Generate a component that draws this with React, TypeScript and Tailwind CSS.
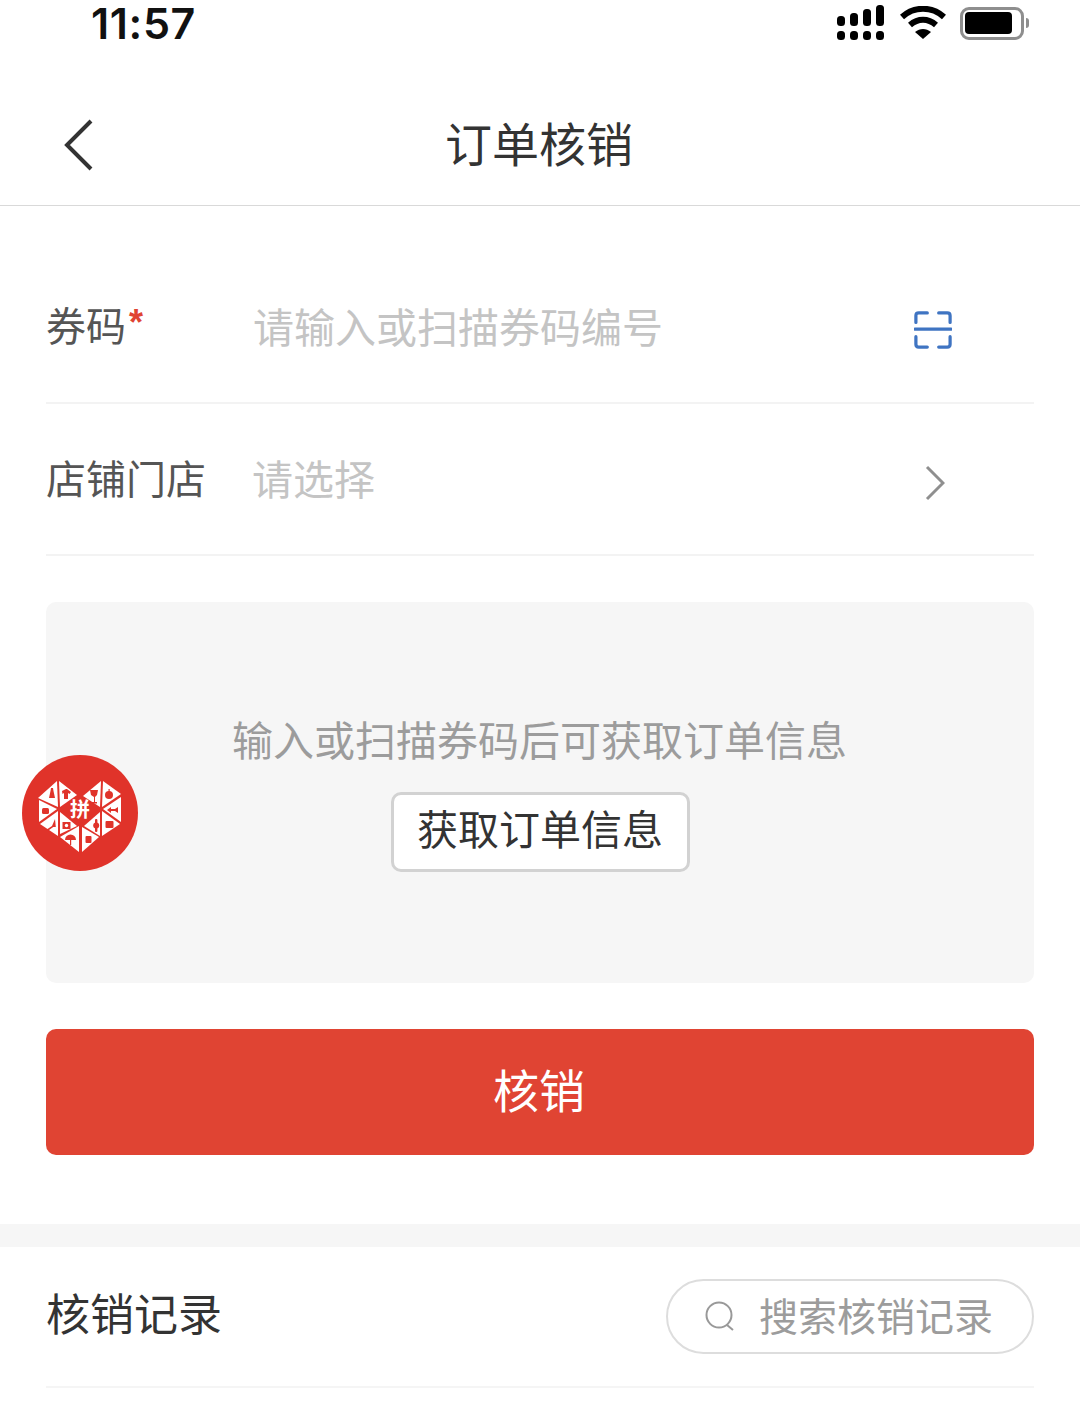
const font = { fontFamily: '"Noto Sans CJK SC", "Liberation Sans", sans-serif' };

function StatusBar() {
  return (
    <div className="flex h-[48px] items-start justify-between pl-[91px] pr-[52px]">
      <span className="text-[43px] leading-[46px] font-semibold tracking-[0.6px] text-[#111] font-['Inter']">11:57</span>
      <div className="flex items-center gap-[14px] pt-[5px]">
        <svg width="50" height="36" viewBox="0 0 50 36" fill="#000">
          <rect x="1" y="11" width="8" height="10" rx="3.5" />
          <rect x="14" y="8" width="8" height="13" rx="3.5" />
          <rect x="27" y="4" width="8" height="17" rx="3.5" />
          <rect x="40" y="0" width="8" height="21" rx="3.5" />
          <rect x="1" y="26" width="8" height="9" rx="3.5" />
          <rect x="14" y="26" width="8" height="9" rx="3.5" />
          <rect x="27" y="26" width="8" height="9" rx="3.5" />
          <rect x="40" y="26" width="8" height="9" rx="3.5" />
        </svg>
        <svg width="46" height="34" viewBox="0 0 46 34" fill="none" stroke="#000" strokeWidth="6">
          <path d="M2 11 C14 0 32 0 44 11" />
          <path d="M10 19 C18 12 28 12 36 19" />
          <path d="M15 26 L23 33 L31 26 C26 22 20 22 15 26Z" fill="#000" stroke="none" />
        </svg>
        <div className="-mr-[1px] flex items-center gap-[2px]">
          <div className="flex h-[33px] w-[64px] items-center rounded-[9px] border-[3px] border-[#8e8e8e] p-[2px]">
            <div className="h-[22px] w-[47px] rounded-[4px] bg-black" />
          </div>
          <div className="h-[10px] w-[3px] rounded-r-full bg-[#8e8e8e]" />
        </div>
      </div>
    </div>
  );
}

function NavBar() {
  return (
    <div className="relative flex h-[158px] items-center justify-center border-b border-[#d9d9d9] pt-[30px] pr-[2px]">
      <svg className="absolute left-[64px] top-[71px]" width="30" height="52" viewBox="0 0 30 52" fill="none" stroke="#333" strokeWidth="4">
        <path d="M27 2 L3 26 L27 50" />
      </svg>
      <span className="text-[47px] leading-[60px] text-[#333]">订单核销</span>
    </div>
  );
}

function CodeRow() {
  return (
    <div className="flex h-[198px] items-center border-b-2 border-[#f3f3f3] pt-[46px]">
      <div className="flex w-[207px] items-start pb-[7px]">
        <span className="text-[40px] leading-[50px] text-[#555]">券码</span>
        <span className="ml-[3px] mt-[6px] font-['Liberation_Sans'] text-[36px] leading-[36px] font-bold text-[#e04433]">*</span>
      </div>
      <span className="flex-1 pb-[4px] text-[41px] leading-[50px] text-[#c4c4c4]">请输入或扫描券码编号</span>
      <svg className="mr-[82px] mt-[5px]" width="38" height="38" viewBox="0 0 40 40" fill="none" stroke="#3f74c2" strokeWidth="3.4" strokeLinecap="round">
        <path d="M2 12 V5 Q2 2 5 2 H14" />
        <path d="M26 2 H35 Q38 2 38 5 V12" />
        <path d="M1 19 H39" />
        <path d="M2 27 V35 Q2 38 5 38 H14" />
        <path d="M26 38 H35 Q38 38 38 35 V27" />
      </svg>
    </div>
  );
}

function StoreRow() {
  return (
    <div className="flex h-[152px] items-center border-b-2 border-[#f3f3f3]">
      <span className="w-[207px] pb-[4px] text-[40px] leading-[50px] text-[#555]">店铺门店</span>
      <span className="-ml-[1px] flex-1 pb-[4px] text-[41px] leading-[50px] text-[#c4c4c4]">请选择</span>
      <svg className="mr-[89px] mt-[8px]" width="20" height="36" viewBox="0 0 20 36" fill="none" stroke="#8f8f8f" strokeWidth="3">
        <path d="M2 2 L18 18 L2 34" />
      </svg>
    </div>
  );
}

function InfoBox() {
  return (
    <div className="mt-[46px] flex h-[381px] flex-col items-center rounded-[10px] bg-[#f6f6f6] pt-[109px]">
      <span className="pr-[1px] text-[41px] leading-[54px] text-[#9c9c9c]">输入或扫描券码后可获取订单信息</span>
      <button className="mt-[27px] h-[80px] w-[299px] rounded-[10px] border-[3px] border-[#d2d2d2] bg-white pb-[10px] text-[41px] leading-[50px] text-[#333]">
        获取订单信息
      </button>
    </div>
  );
}

function PddLogo() {
  return (
    <div className="absolute left-[22px] top-[755px] flex h-[116px] w-[116px] items-center justify-center rounded-full bg-[#e0332a]">
      <svg width="84" height="74" viewBox="0 0 84 74" className="mt-[8px]">
        <g fill="#fff">
          <path d="M0 18 L19 1 L20 27 Z" />
          <path d="M21 1 L39 15 L22 27 Z" />
          <path d="M45 16 L63 1 L62 27 Z" />
          <path d="M65 1 L83 14 L64 27 Z" />
          <path d="M1 20 L19 29 L1 42 Z" />
          <path d="M83 17 L65 29 L83 42 Z" />
          <path d="M2 44 L20 31 L20 56 Z" />
          <path d="M22 32 L39 46 L22 54 Z" />
          <path d="M22 57 L41 46 L41 72 Z" />
          <path d="M44 47 L61 57 L44 72 Z" />
          <path d="M46 46 L62 32 L62 56 Z" />
          <path d="M64 31 L82 44 L64 56 Z" />
        </g>
        <g fill="#e0332a">
          {/* dress */}
          <path d="M13 8 h2 l0.5 3 l1.5 7 h-6 l1.5 -7 Z" />
          {/* shirt */}
          <path d="M24 11 l4 -2 h1 l4 3 l-1.5 2 l-1.5 -1 v6 h-4 v-6 l-1.5 1 Z" />
          {/* cup */}
          <path d="M52 10 h8 l-1 5 l-2 2 v5 h2 v1.5 h-5 v-1.5 h2 v-5 l-3 -2 Z" />
          {/* apple */}
          <circle cx="71" cy="15" r="4" />
          <rect x="70.5" y="9" width="1.2" height="3" />
          {/* handbag */}
          <rect x="4" y="28" width="7" height="6" rx="1.5" />
          {/* fish */}
          <path d="M69 30 l4 -3 v2 h4 l3 -2 v6 l-3 -2 h-4 v2 Z" />
          {/* heel */}
          <path d="M8 50 l6 -4 l3 -7 l0.8 8 h-2.5 l-5 3.5 Z" />
          {/* camera */}
          <path d="M24.5 42 h8 v7 h-8 Z" />
          {/* umbrella */}
          <path d="M27 60 a5.5 5.5 0 0 1 11 0 Z" />
          <rect x="32" y="60" width="1.2" height="5" />
          {/* bag */}
          <rect x="47.5" y="56" width="6" height="7" rx="1" />
          {/* watch */}
          <rect x="57" y="39" width="2.4" height="13" rx="1" />
          <circle cx="58.2" cy="45.5" r="3" />
          {/* calendar */}
          <rect x="67.5" y="41" width="8" height="7" rx="1" />
        </g>
        <circle cx="28.5" cy="45.5" r="1.7" fill="#fff" />
        <text x="42" y="37" textAnchor="middle" fontSize="20" fontWeight="700" fill="#fff">拼</text>
      </svg>
    </div>
  );
}

function RecordHeader() {
  return (
    <div className="flex h-[141px] items-center justify-between border-b-2 border-[#f5f5f5] pb-[1px]">
      <span className="pb-[8px] text-[44px] leading-[56px] text-[#333]">核销记录</span>
      <div className="flex h-[75px] w-[368px] items-center rounded-full border-[2.5px] border-[#dddddd] pl-[37px]">
        <svg width="30" height="30" viewBox="0 0 30 30" fill="none" stroke="#999" strokeWidth="2">
          <circle cx="14" cy="14" r="12.5" />
          <path d="M22 24 L28 29" />
        </svg>
        <span className="ml-[24px] pb-[5px] text-[39px] leading-[50px] text-[#9c9c9c]">搜索核销记录</span>
      </div>
    </div>
  );
}

export default function App() {
  return (
    <div className="relative h-[1410px] w-[1080px] overflow-hidden bg-white" style={font}>
      <StatusBar />
      <NavBar />
      <div className="px-[46px]">
        <CodeRow />
        <StoreRow />
        <InfoBox />
        <button className="mt-[46px] h-[126px] w-full rounded-[10px] bg-[#e04433] pr-[2px] pb-[9px] text-[46px] leading-[60px] text-white">
          核销
        </button>
      </div>
      <div className="mt-[69px] h-[23px] bg-[#f6f6f6]" />
      <div className="px-[46px]">
        <RecordHeader />
      </div>
      <PddLogo />
    </div>
  );
}
